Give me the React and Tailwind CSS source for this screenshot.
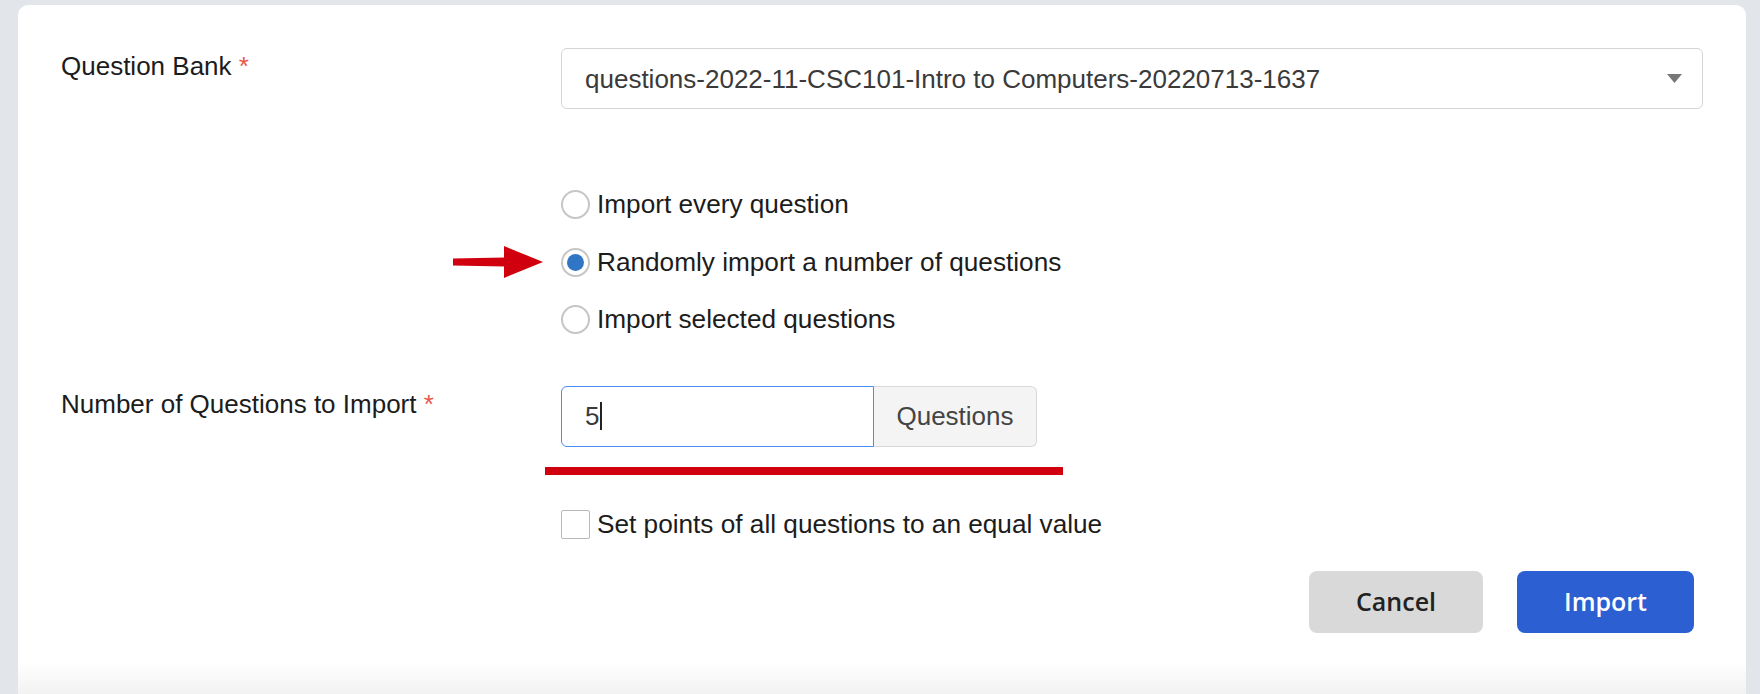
import React from "react";

function Radio({ checked }) {
  return (
    <span className="flex h-[29px] w-[29px] shrink-0 items-center justify-center rounded-full border-[2.5px] border-[#c6c6c6] bg-white">
      {checked && <span className="h-[17px] w-[17px] rounded-full bg-[#3176c4]" />}
    </span>
  );
}

function Arrow() {
  return (
    <svg
      className="absolute left-[-108px] top-1/2 -translate-y-1/2"
      width="90"
      height="34"
      viewBox="0 0 90 34"
    >
      <polygon points="0,13.5 52,12.5 52,21.5 0,20.5" fill="#d0000e" />
      <polygon points="51,1 90,17 51,33" fill="#d0000e" />
    </svg>
  );
}

export default function App() {
  return (
    <div
      className="h-[694px] w-full overflow-hidden bg-[#e2e5e9] pl-[18px] pr-[14px] pt-[5px]"
      style={{ fontFamily: '"Liberation Sans", Arial, sans-serif' }}
    >
      <div className="relative h-[689px] rounded-t-[10px] bg-white pl-[43px] pr-[43px] pt-[43px]">
        {/* Question Bank row */}
        <div className="flex">
          <div className="w-[500px] shrink-0 text-[26px] leading-[36px] text-[#1c1c1c]">
            Question Bank <span className="text-[#e8574a]">*</span>
          </div>
          <div className="flex h-[61px] flex-1 items-center justify-between rounded-[6px] border border-[#d5d5d5] bg-white pl-[23px] pr-[20px]">
            <span className="text-[26px] leading-none text-[#3a3a3a]">
              questions-2022-11-CSC101-Intro to Computers-20220713-1637
            </span>
            <svg width="15" height="9" viewBox="0 0 15 9">
              <polygon points="0,0 15,0 7.5,9" fill="#777777" />
            </svg>
          </div>
        </div>

        {/* Radios */}
        <div className="ml-[500px] mt-[67px] flex flex-col">
          <label className="flex h-[57.5px] items-center gap-[7px] text-[26.2px] text-[#1c1c1c]">
            <Radio />
            <span>Import every question</span>
          </label>
          <label className="relative flex h-[57.5px] items-center gap-[7px] text-[26.2px] text-[#1c1c1c]">
            <Arrow />
            <Radio checked />
            <span>Randomly import a number of questions</span>
          </label>
          <label className="flex h-[57.5px] items-center gap-[7px] text-[26.2px] text-[#1c1c1c]">
            <Radio />
            <span>Import selected questions</span>
          </label>
        </div>

        {/* Number of questions row */}
        <div className="mt-[37px] flex">
          <div className="w-[500px] shrink-0 text-[26px] leading-[36px] text-[#1c1c1c]">
            Number of Questions to Import <span className="text-[#e8574a]">*</span>
          </div>
          <div className="flex flex-col">
            <div className="flex h-[61px]">
              <div className="flex w-[313px] items-center rounded-l-[6px] border border-[#4a8cf5] pl-[23px] text-[26px] text-[#3a3a3a]">
                <span className="leading-none">5</span>
                <span className="ml-[1px] h-[28px] w-[2px] bg-[#222]" />
              </div>
              <div className="flex w-[163px] items-center justify-center rounded-r-[6px] border border-l-0 border-[#d8d8d8] bg-[#f4f4f4] text-[26px] text-[#444]">
                Questions
              </div>
            </div>
            <div className="-ml-[16px] mt-[20px] h-[8px] w-[518px] bg-[#d0000e]" />
            <label className="mt-[35px] flex items-center gap-[7px] text-[26.2px] leading-[29px] text-[#1c1c1c]">
              <span className="h-[29px] w-[29px] shrink-0 rounded-[2px] border border-[#b8b8b8] bg-white" />
              <span>Set points of all questions to an equal value</span>
            </label>
          </div>
        </div>

        {/* Buttons */}
        <div
          className="mr-[9px] mt-[32px] flex justify-end gap-[34px]"
          style={{ fontFamily: '"Open Sans", "Noto Sans", sans-serif' }}
        >
          <button className="h-[62px] w-[174px] rounded-[8px] bg-[#d9d9d9] text-[25px] font-semibold text-[#222]">
            Cancel
          </button>
          <button className="h-[62px] w-[177px] rounded-[8px] bg-[#2b5fd2] text-[25px] font-semibold text-white">
            Import
          </button>
        </div>

        <div className="pointer-events-none absolute inset-x-0 bottom-0 h-[32px] bg-gradient-to-b from-white to-[#f2f2f2]" />
      </div>
    </div>
  );
}
